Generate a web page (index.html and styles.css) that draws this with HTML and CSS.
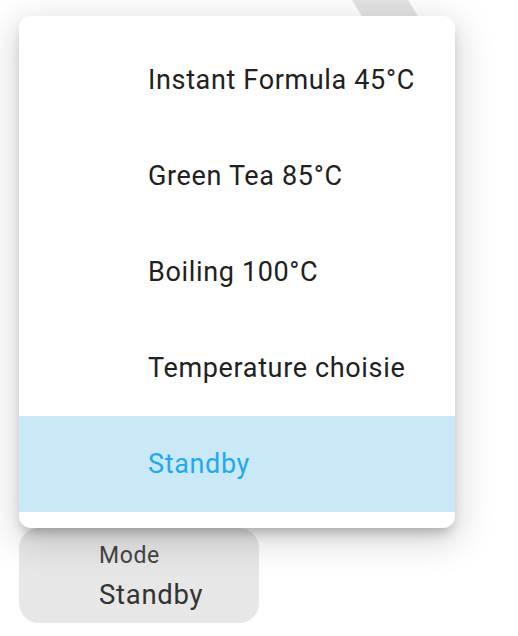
FILE: index.html
```html
<!DOCTYPE html>
<html lang="en">
	<head>
		<title>Mode</title>
        <meta charset="utf-8">
        <link rel="stylesheet" href="styles.css">
	</head>
	<body>
        <svg class="stripe" width="518" height="60" viewBox="0 0 518 60">
            <polygon points="352,0 408,0 445,60 389,60" fill="#e3e3e3"></polygon>
        </svg>
        <div class="field">
            <div class="label">Mode</div>
            <div class="value">Standby</div>
        </div>
        <ul class="menu">
            <li class="item">Instant Formula 45°C</li>
            <li class="item">Green Tea 85°C</li>
            <li class="item">Boiling 100°C</li>
            <li class="item">Temperature choisie</li>
            <li class="item selected">Standby</li>
        </ul>
	</body>
</html>
```

FILE: styles.css
```css
html, body {
    margin: 0;
    background: #fff;
    font-family: Roboto, "Noto Sans", sans-serif;
}

body {
    position: relative;
    width: 518px;
    height: 636px;
    overflow: hidden;
}

.stripe {
    position: absolute;
    top: 0;
    left: 0;
}

.field {
    position: relative;
    margin: 528px 0 0 19px;
    width: 240px;
    height: 95px;
    box-sizing: border-box;
    padding: 12px 0 0 80px;
    background: #e7e7e7;
    border-radius: 20px;
}

.label {
    font-size: 23px;
    line-height: 32px;
    letter-spacing: 0.6px;
    color: #444;
}

.value {
    font-size: 27.5px;
    line-height: 46px;
    letter-spacing: 0.7px;
    color: #333;
}

.menu {
    position: absolute;
    top: 16px;
    left: 19px;
    width: 436px;
    margin: 0;
    padding: 16px 0;
    list-style: none;
    background: #fff;
    border-radius: 12px;
    box-shadow: 0 8px 12px -4px rgba(0, 0, 0, 0.25), 0 10px 34px 6px rgba(0, 0, 0, 0.15);
}

.item {
    height: 96px;
    display: flex;
    align-items: center;
    padding-left: 129px;
    font-size: 27px;
    letter-spacing: 0.65px;
    color: #212121;
}

.selected {
    background: #c9e9f9;
    color: #1eaaf1;
}
```
